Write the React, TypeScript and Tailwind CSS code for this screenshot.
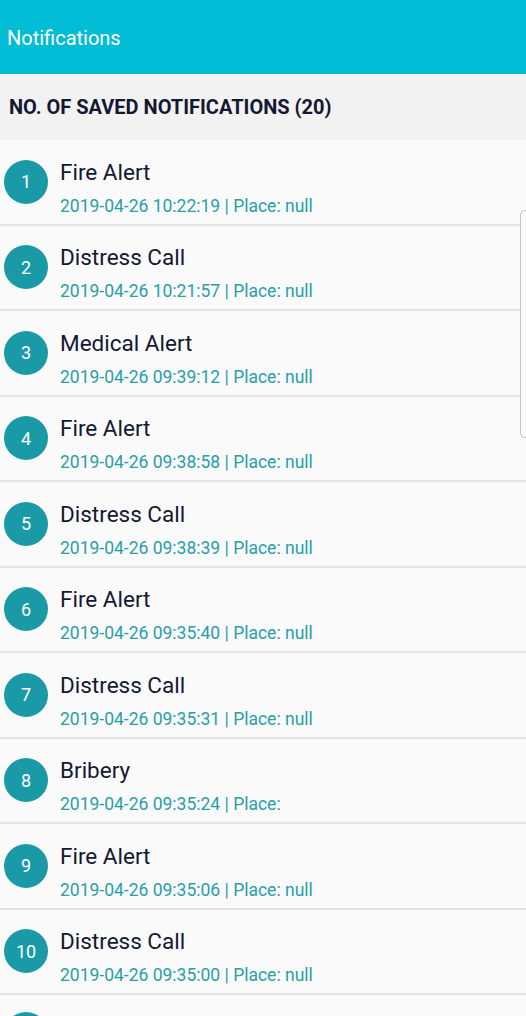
import React from 'react';

interface Item {
  title: string;
  time: string;
  place: string;
}

const items: Item[] = [
  { title: 'Fire Alert', time: '2019-04-26 10:22:19', place: 'null' },
  { title: 'Distress Call', time: '2019-04-26 10:21:57', place: 'null' },
  { title: 'Medical Alert', time: '2019-04-26 09:39:12', place: 'null' },
  { title: 'Fire Alert', time: '2019-04-26 09:38:58', place: 'null' },
  { title: 'Distress Call', time: '2019-04-26 09:38:39', place: 'null' },
  { title: 'Fire Alert', time: '2019-04-26 09:35:40', place: 'null' },
  { title: 'Distress Call', time: '2019-04-26 09:35:31', place: 'null' },
  { title: 'Bribery', time: '2019-04-26 09:35:24', place: '' },
  { title: 'Fire Alert', time: '2019-04-26 09:35:06', place: 'null' },
  { title: 'Distress Call', time: '2019-04-26 09:35:00', place: 'null' },
];

export default function App() {
  return (
    <div className="relative h-[1016px] w-[526px] overflow-hidden bg-[#fafafa] font-['Roboto',sans-serif]">
      <div className="flex h-[74px] items-center bg-[#00bcd4] px-[7px] pt-[2px] text-[20px] text-white">
        Notifications
      </div>
      <div className="flex h-[66px] items-center bg-[#f2f2f2] px-[9px] text-[20px] font-bold text-[#141833]">
        NO. OF SAVED NOTIFICATIONS (20)
      </div>

      <div className="flex flex-col">
        {items.map((item, i) => (
          <div
            key={i}
            className="box-border flex h-[85.5px] shrink-0 items-center border-b-2 border-[#e4e4e4] pl-[4px]"
          >
            <div className="flex h-[44px] w-[44px] shrink-0 items-center justify-center rounded-full bg-[#1a9aa6] text-[18px] text-white">
              {i + 1}
            </div>
            <div className="ml-[12px] flex flex-col pt-[11px]">
              <div className="text-[22.5px] leading-[28px] text-[#141833]">{item.title}</div>
              <div className="mt-[9px] text-[17.5px] leading-[22px] text-[#2a9ea8]">
                {item.time} | Place: {item.place}
              </div>
            </div>
          </div>
        ))}
        <div className="flex h-[40px] shrink-0 items-start pl-[4px] pt-[17px]">
          <div className="h-[44px] w-[44px] shrink-0 rounded-full bg-[#1a9aa6]" />
        </div>
      </div>

      <div className="absolute right-0 top-[210px] h-[228px] w-[6px] rounded-l-[5px] border border-r-0 border-[#c4c4c4] bg-[#fafafa]" />
    </div>
  );
}
